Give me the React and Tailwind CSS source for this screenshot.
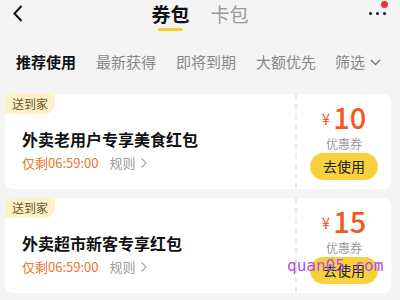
import React from 'react';

const coupons = [
    { title: '外卖老用户专享美食红包', amount: '10' },
    { title: '外卖超市新客专享红包', amount: '15' },
];

const filters = ['推荐使用', '最新获得', '即将到期', '大额优先'];

const CouponCard = ({ title, amount }) => (
    <div className="flex h-[95px] w-[386px] bg-white rounded-[8px] overflow-hidden">
        <div className="flex-1 flex flex-col">
            <div className="w-[50px] h-[20px] bg-[#fdf1c9] rounded-br-[10px] flex items-center justify-center text-[12px] leading-none text-[#6b5223]">
                送到家
            </div>
            <div className="pl-[17px] pt-[14px] text-[16px] leading-[22px] font-semibold text-[#111]">
                {title}
            </div>
            <div className="pl-[17px] pt-[4px] flex items-center text-[13px] leading-[18px]">
                <span className="text-[#e8772e]">仅剩06:59:00</span>
                <span className="ml-[11px] text-[#999]">规则</span>
                <svg className="ml-[4px]" width="8" height="12" viewBox="0 0 8 12" fill="none">
                    <path d="M1.5 1.5 L6 6 L1.5 10.5" stroke="#aaa" strokeWidth="1.3" />
                </svg>
            </div>
        </div>
        <div className="w-[96px] border-l-2 border-dashed border-[#ececec] flex flex-col items-center pt-[6px]">
            <div className="h-[32px] flex items-center text-[#f4581c]">
                <span className="text-[15px] leading-[16px] mr-[3px] mt-[6px]">¥</span>
                <span className="text-[29px] leading-[32px] font-medium">{amount}</span>
            </div>
            <div className="mt-[4px] h-[16px] text-[12px] leading-[16px] text-[#999]">优惠券</div>
            <div className="mt-[1px] w-[68px] h-[27px] rounded-full bg-[#f8d23c] flex items-center justify-center text-[14px] text-[#222]">
                去使用
            </div>
        </div>
    </div>
);

const App = () => {
    return (
        <div
            className="relative w-[400px] h-[300px] bg-[#f4f4f4] overflow-hidden"
            style={{ fontFamily: '"Noto Sans CJK SC", "Noto Sans", sans-serif' }}
        >
            {/* header */}
            <div className="grid grid-cols-[1fr_auto_1fr] h-[36px]">
                <div className="pl-[13px] pt-[5px]">
                    <svg width="10" height="17" viewBox="0 0 10 17" fill="none">
                        <path d="M8.5 1 L1.5 8.5 L8.5 16" stroke="#111" strokeWidth="2" />
                    </svg>
                </div>
                <div className="flex gap-[21px] pt-[2px]">
                    <div className="flex flex-col items-center">
                        <span className="text-[19px] leading-[24px] font-bold text-[#111]">券包</span>
                        <span className="mt-[2px] w-[25px] h-[3px] rounded-full bg-[#f8cf2d]" />
                    </div>
                    <span className="text-[19px] leading-[24px] text-[#999]">卡包</span>
                </div>
                <div className="flex justify-end pr-[14px] pt-[4px] relative">
                    <div className="flex gap-[4px] mt-[8px]">
                        <span className="w-[3px] h-[3px] rounded-full bg-[#111]" />
                        <span className="w-[3px] h-[3px] rounded-full bg-[#111]" />
                        <span className="w-[3px] h-[3px] rounded-full bg-[#111]" />
                    </div>
                    <span className="absolute right-[12px] top-[1px] w-[7px] h-[7px] rounded-full bg-[#f23030]" />
                </div>
            </div>

            {/* filters */}
            <div className="flex items-center h-[52px] pl-[16px] gap-[20px] text-[15px] text-[#888]">
                {filters.map((f, i) => (
                    <span key={f} className={i === 0 ? 'font-bold text-[#111]' : ''}>{f}</span>
                ))}
                <span className="flex items-center -ml-[1px]">
                    筛选
                    <svg className="ml-[5px]" width="11" height="7" viewBox="0 0 11 7" fill="none">
                        <path d="M1 1 L5.5 5.5 L10 1" stroke="#777" strokeWidth="1.4" />
                    </svg>
                </span>
            </div>

            {/* coupons */}
            <div className="flex flex-col gap-[9px] pl-[5px] pt-[6px]">
                {coupons.map((c) => (
                    <CouponCard key={c.title} {...c} />
                ))}
            </div>

            <div
                className="absolute left-[287px] top-[258px] text-[16px] leading-none text-[#b44cf0]"
                style={{ fontFamily: '"DejaVu Sans Mono", monospace' }}
            >
                quan05.com
            </div>
        </div>
    );
};

export default App;
